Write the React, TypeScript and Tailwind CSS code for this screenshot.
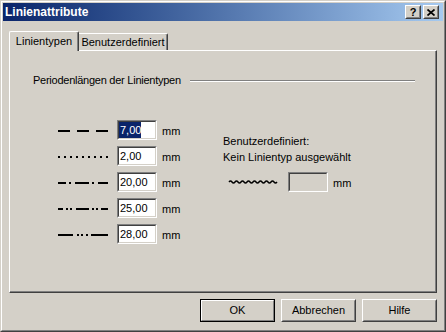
import type { ReactNode } from "react";

type Seg = [number, number];

// dash patterns of the five line types, [x, width] inside a 50px strip
const lineTypes: { value: string; segs: Seg[]; selected?: boolean }[] = [
  { value: "7,00", selected: true, segs: [[0, 12], [19, 12], [38, 12]] },
  {
    value: "2,00",
    segs: [[0, 2], [6, 2], [12, 2], [18, 2], [24, 2], [30, 2], [36, 2], [42, 2], [48, 2]],
  },
  { value: "20,00", segs: [[0, 8], [11, 2], [17, 14], [34, 2], [40, 10]] },
  { value: "25,00", segs: [[0, 5], [8, 2], [12, 2], [18, 13], [34, 2], [38, 2], [43, 7]] },
  { value: "28,00", segs: [[0, 15], [19, 2], [23, 2], [28, 2], [33, 17]] },
];

const LineSample = ({ segs }: { segs: Seg[] }) => (
  <svg width="50" height="2" className="mt-[10px] shrink-0">
    {segs.map(([x, w]) => (
      <rect key={x} x={x} y={0} width={w} height={2} fill="#000" />
    ))}
  </svg>
);

const wave = (() => {
  let d = "M0 2";
  for (let x = 0; x < 48; x += 3) {
    d += ` Q${x + 1.5} ${(x / 3) % 2 === 0 ? 0 : 4} ${x + 3} 2`;
  }
  return d;
})();

const Edit = ({
  value,
  selected,
  disabled,
}: {
  value?: string;
  selected?: boolean;
  disabled?: boolean;
}) => (
  <div className="w-[40px] h-[20px] shrink-0 border border-t-[#808080] border-l-[#808080] border-r-white border-b-white">
    <div
      className={`h-full border border-t-[#404040] border-l-[#404040] border-r-[#d4d0c8] border-b-[#d4d0c8] flex items-center overflow-hidden ${
        disabled ? "bg-[#d4d0c8]" : "bg-white"
      }`}
    >
      {value && (
        <span
          className={`h-[16px] leading-[16px] pl-px ${
            selected ? "bg-[#0a246a] text-white" : ""
          }`}
        >
          {value}
        </span>
      )}
    </div>
  </div>
);

const PushButton = ({ children, isDefault }: { children: ReactNode; isDefault?: boolean }) =>
  isDefault ? (
    <div className="w-[75px] h-[23px] border border-black">
      <div className="h-full border border-t-white border-l-white border-r-[#808080] border-b-[#808080] flex items-center justify-center">
        {children}
      </div>
    </div>
  ) : (
    <div className="w-[75px] h-[23px] border border-t-white border-l-white border-r-[#404040] border-b-[#404040]">
      <div className="h-full border border-t-[#d4d0c8] border-l-[#d4d0c8] border-r-[#808080] border-b-[#808080] flex items-center justify-center">
        {children}
      </div>
    </div>
  );

const CaptionButton = ({ children }: { children: ReactNode }) => (
  <div className="w-[16px] h-[14px] bg-[#d4d0c8] border border-t-white border-l-white border-r-[#404040] border-b-[#404040]">
    <div className="h-full border border-t-[#d4d0c8] border-l-[#d4d0c8] border-r-[#808080] border-b-[#808080] flex items-center justify-center">
      {children}
    </div>
  </div>
);

export default function App() {
  return (
    <div className="w-[446px] h-[332px] bg-[#d4d0c8] border border-t-[#d4d0c8] border-l-[#d4d0c8] border-r-[#404040] border-b-[#404040] font-['Liberation_Sans',Arial,sans-serif] text-[11px] leading-[13px] text-black select-none">
      <div className="h-full border border-t-white border-l-white border-r-[#808080] border-b-[#808080] p-px flex flex-col">
        {/* title bar */}
        <div className="h-[18px] shrink-0 flex items-center bg-linear-to-r from-[#0a246a] to-[#a6caf0]">
          <div className="pl-[2px] text-[12px] font-bold text-white">Linienattribute</div>
          <div className="ml-auto mr-[4px] flex gap-[2px]">
            <CaptionButton>
              <span className="text-[11px] leading-[10px] font-bold">?</span>
            </CaptionButton>
            <CaptionButton>
              <svg width="8" height="7" viewBox="0 0 8 7">
                <path d="M0.5 0.5 L7.5 6.5 M7.5 0.5 L0.5 6.5" stroke="#000" strokeWidth="1.7" />
              </svg>
            </CaptionButton>
          </div>
        </div>

        <div className="flex-1 flex flex-col pt-[10px] px-[6px]">
          {/* tabs */}
          <div className="flex items-end h-[19px]">
            <div className="relative z-10 -mb-px w-[70px] h-[20px] bg-[#d4d0c8] border-l border-t border-r border-l-white border-t-white border-r-[#404040] shadow-[inset_-1px_0_0_#808080] rounded-t-[2px] flex items-center justify-center pb-px">
              Linientypen
            </div>
            <div className="w-[89px] h-[17px] border-t border-r border-t-white border-r-[#404040] shadow-[inset_-1px_0_0_#808080] rounded-tr-[2px] flex items-center justify-center">
              Benutzerdefiniert
            </div>
          </div>

          {/* tab page */}
          <div className="h-[243px] shrink-0 border border-t-white border-l-white border-r-[#404040] border-b-[#404040] shadow-[inset_-1px_-1px_0_#808080]">
            <div className="flex items-center pt-[23px] pl-[23px] pr-[21px]">
              <span className="tracking-[-0.25px]">Periodenlängen der Linientypen</span>
              <div className="ml-[9px] flex-1 h-[2px] border-t border-b border-t-[#808080] border-b-white" />
            </div>

            <div className="flex mt-[33px] pl-[48px]">
              <div className="w-[165px] flex flex-col gap-[6px]">
                {lineTypes.map((lt) => (
                  <div key={lt.value} className="flex h-[20px] items-start">
                    <LineSample segs={lt.segs} />
                    <div className="ml-[9px]">
                      <Edit value={lt.value} selected={lt.selected} />
                    </div>
                    <span className="ml-[5px] pt-[5px]">mm</span>
                  </div>
                ))}
              </div>

              <div className="flex flex-col pt-[13px]">
                <div className="leading-[16px]">Benutzerdefiniert:</div>
                <div className="leading-[16px]">Kein Linientyp ausgewählt</div>
                <div className="flex h-[20px] items-start mt-[7px]">
                  <svg width="50" height="4" className="ml-[6px] mt-[8px] shrink-0 overflow-visible">
                    <path d={wave} fill="none" stroke="#000" strokeWidth="1.4" />
                  </svg>
                  <div className="ml-[9px]">
                    <Edit disabled />
                  </div>
                  <span className="ml-[5px] pt-[5px]">mm</span>
                </div>
              </div>
            </div>
          </div>

          {/* dialog buttons */}
          <div className="mt-[6px] flex justify-end gap-[6px]">
            <PushButton isDefault>OK</PushButton>
            <PushButton>Abbrechen</PushButton>
            <PushButton>Hilfe</PushButton>
          </div>
        </div>
      </div>
    </div>
  );
}
